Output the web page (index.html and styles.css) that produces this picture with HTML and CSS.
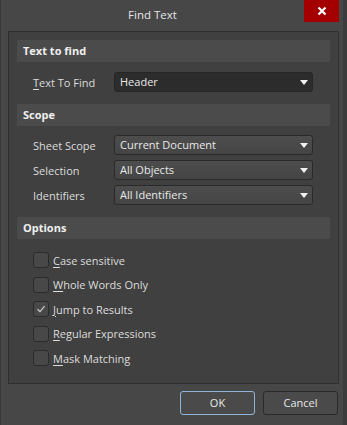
FILE: index.html
```html
<!DOCTYPE html>
<html lang="en">
<head>
    <meta charset="UTF-8">
    <meta name="viewport" content="width=device-width, initial-scale=1.0">
    <title>Find Text</title>
    <link rel="stylesheet" href="styles.css">
</head>
<body>
    <div class="dialog">
        <div class="title-bar">
            <div class="title">Find Text</div>
            <a href="javascript:;" class="close-btn">
                <svg width="10" height="10" viewBox="0 0 10 10">
                    <path d="M1.5 1.5 L8.5 8.5 M8.5 1.5 L1.5 8.5" stroke="#fff" stroke-width="2.2" />
                </svg>
            </a>
        </div>

        <div class="panel">
            <div class="section-head">Text to find</div>
            <div class="field-list first">
                <div class="field">
                    <label><u>T</u>ext To Find</label>
                    <div class="combo edit">Header<span class="arrow"></span></div>
                </div>
            </div>

            <div class="section-head">Scope</div>
            <div class="field-list">
                <div class="field">
                    <label>Sheet Scope</label>
                    <div class="combo">Current Document<span class="arrow"></span></div>
                </div>
                <div class="field">
                    <label>Selection</label>
                    <div class="combo">All Objects<span class="arrow"></span></div>
                </div>
                <div class="field">
                    <label>Identifiers</label>
                    <div class="combo">All Identifiers<span class="arrow"></span></div>
                </div>
            </div>

            <div class="section-head">Options</div>
            <div class="check-list">
                <div class="check"><span class="box"></span><u>C</u>ase sensitive</div>
                <div class="check"><span class="box"></span><u>W</u>hole Words Only</div>
                <div class="check">
                    <span class="box">
                        <svg width="14" height="14" viewBox="0 0 14 14">
                            <path d="M3.5 7.2 L6 9.6 L10.6 4.2" fill="none" stroke="#cfcfcf" stroke-width="1.2" />
                        </svg>
                    </span><u>J</u>ump to Results
                </div>
                <div class="check"><span class="box"></span><u>R</u>egular Expressions</div>
                <div class="check"><span class="box"></span><u>M</u>ask Matching</div>
            </div>
        </div>

        <div class="buttons">
            <a href="javascript:;" class="btn default">OK</a>
            <a href="javascript:;" class="btn">Cancel</a>
        </div>
    </div>
</body>
</html>
```

FILE: styles.css
```css
* {
    box-sizing: border-box;
}

body {
    margin: 0;
    padding: 0;
    background-color: #464646;
    font-family: "Open Sans", "Noto Sans", sans-serif;
    font-size: 11px;
    color: #dcdcdc;
}

a {
    text-decoration: none;
    color: inherit;
}

u {
    text-decoration-thickness: 1px;
    text-underline-offset: 2px;
}

.dialog {
    width: 347px;
    height: 425px;
    background-color: #474747;
    border-left: 1px solid #383838;
    border-right: 4px solid #3c3c3c;
    display: flex;
    flex-direction: column;
}

.title-bar {
    height: 31px;
    display: flex;
    align-items: flex-start;
}

.title {
    flex: 1;
    text-align: center;
    line-height: 30px;
    font-size: 11.5px;
    color: #e6e6e6;
}

.close-btn {
    width: 35px;
    height: 22px;
    margin-right: 4px;
    background-color: #a50000;
    display: flex;
    align-items: center;
    justify-content: center;
}

.panel {
    height: 353px;
    margin: 0 4px 0 7px;
    padding: 8px 8px;
    background-color: #404040;
    border: 1px solid #2f2f2f;
}

.section-head {
    height: 22px;
    line-height: 22px;
    padding-left: 6px;
    background-color: #4b4b4b;
    font-weight: bold;
    color: #f0f0f0;
}

.field-list {
    display: flex;
    flex-direction: column;
    gap: 5px;
    padding: 9px 17px 12px 16px;
}

.field-list.first {
    padding-top: 10px;
}

.field {
    display: flex;
    align-items: center;
    height: 20px;
}

.field label {
    width: 81px;
    flex-shrink: 0;
}

.combo {
    flex: 1;
    height: 20px;
    line-height: 18px;
    padding-left: 5px;
    border: 1px solid #2a2a2a;
    border-radius: 3px;
    background: linear-gradient(#4d4d4d, #454545);
    color: #e8e8e8;
    display: flex;
    align-items: center;
}

.combo.edit {
    background: #2c2c2c;
    border-color: #262626;
}

.arrow {
    margin-left: auto;
    margin-right: 4px;
    width: 0;
    height: 0;
    border-left: 4px solid transparent;
    border-right: 4px solid transparent;
    border-top: 5px solid #f2f2f2;
}

.check-list {
    display: flex;
    flex-direction: column;
    gap: 8.5px;
    padding: 13px 16px 0 16px;
}

.check {
    display: flex;
    align-items: center;
    height: 16px;
}

.box {
    width: 16px;
    height: 16px;
    margin-right: 4px;
    border: 1px solid #2b2b2b;
    border-radius: 3px;
    background-color: #484848;
    display: flex;
    align-items: center;
    justify-content: center;
}

.buttons {
    display: flex;
    justify-content: flex-end;
    gap: 8px;
    padding: 7px 5px 0 0;
}

.btn {
    width: 75px;
    height: 24px;
    line-height: 22px;
    text-align: center;
    border: 1px solid #2a2a2a;
    border-radius: 3px;
    background-color: #4a4a4a;
    color: #e8e8e8;
}

.btn.default {
    border-color: #8fb4d6;
}
```
